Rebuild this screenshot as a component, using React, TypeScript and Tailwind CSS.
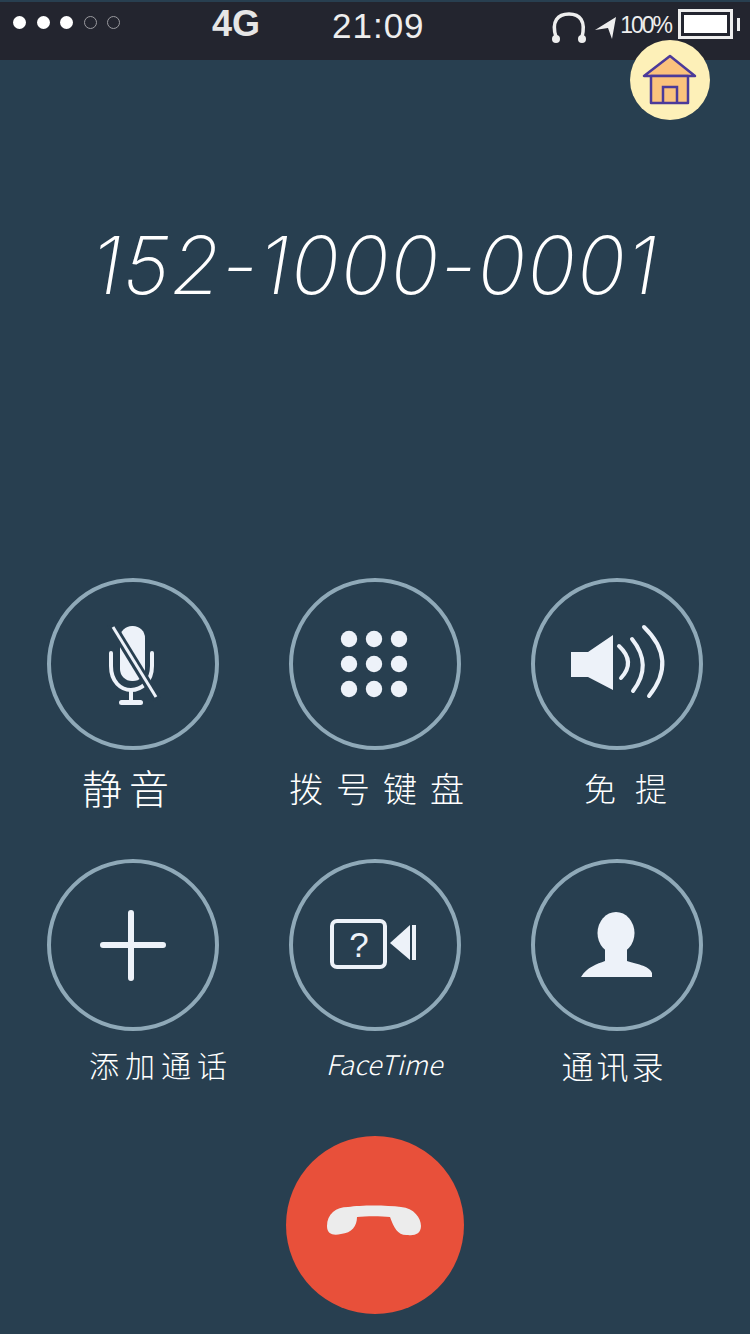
import React from 'react';

const cjk = "font-['Noto_Sans_CJK_SC','Noto_Sans',sans-serif]";

function MicIcon() {
  return (
    <svg viewBox="0 0 172 172" className="h-full w-full">
      <rect x="73" y="48" width="25" height="55" rx="12" fill="#edf2f9" />
      <path d="M64 75V88C64 104 74 112 84 112C94 112 105 104 105 88V75" fill="none" stroke="#edf2f9" strokeWidth="4" strokeLinecap="round" />
      <path d="M84 112V124" stroke="#edf2f9" strokeWidth="4" />
      <rect x="72" y="122" width="24" height="5" rx="2.5" fill="#edf2f9" />
      <path d="M64 46L110 121" stroke="#283f50" strokeWidth="9" />
      <path d="M66 49L109 119" stroke="#edf2f9" strokeWidth="3" />
    </svg>
  );
}

function KeypadIcon() {
  const spots = [61, 86, 111];
  return (
    <svg viewBox="0 0 172 172" className="h-full w-full">
      {spots.map((cy) =>
        [60, 85, 110].map((cx) => <circle key={`${cx}-${cy}`} cx={cx} cy={cy} r="8.2" fill="#edf2f9" />)
      )}
    </svg>
  );
}

function SpeakerIcon() {
  return (
    <svg viewBox="0 0 172 172" className="h-full w-full">
      <path d="M40 74H57L82 57V112L57 99H40Z" fill="#edf2f9" />
      <g fill="none" stroke="#edf2f9" strokeWidth="4" strokeLinecap="round">
        <path d="M88 68Q105 84 90 100" />
        <path d="M101 61Q122 87 102 113" />
        <path d="M113 49Q147 82 118 118" />
      </g>
    </svg>
  );
}

function PlusIcon() {
  return (
    <svg viewBox="0 0 172 172" className="h-full w-full">
      <path d="M84 54V119M56 86H116" stroke="#edf2f9" strokeWidth="6" strokeLinecap="round" />
    </svg>
  );
}

function VideoIcon() {
  return (
    <svg viewBox="0 0 172 172" className="h-full w-full">
      <rect x="43" y="62" width="53" height="46" rx="5" fill="none" stroke="#edf2f9" strokeWidth="4" />
      <text x="70" y="98" textAnchor="middle" fontSize="35" fill="#edf2f9" fontFamily="Liberation Sans, sans-serif">?</text>
      <path d="M101 84L121 66V101Z" fill="#edf2f9" />
      <rect x="123" y="66" width="4" height="35" fill="#edf2f9" />
    </svg>
  );
}

function PersonIcon() {
  return (
    <svg viewBox="0 0 172 172" className="h-full w-full">
      <ellipse cx="85" cy="74" rx="18.5" ry="21" fill="#edf2f9" />
      <path d="M50 118C56 108 66 105 74 102V88H96V102C104 105 118 106 121 114V118Z" fill="#edf2f9" />
    </svg>
  );
}

const actions = [
  { label: '静音', icon: <MicIcon />, labelClass: 'text-[40px] tracking-[7px] -ml-[8px]' },
  { label: '拨号键盘', icon: <KeypadIcon />, labelClass: 'text-[34px] tracking-[13px] ml-[16px]' },
  { label: '免提', icon: <SpeakerIcon />, labelClass: 'text-[32px] tracking-[19px] ml-[36px]' },
  { label: '添加通话', icon: <PlusIcon />, labelClass: 'text-[30px] tracking-[6px] ml-[56px] -mt-[8px]' },
  { label: 'FaceTime', icon: <VideoIcon />, labelClass: 'text-[27px] italic ml-[18px] -mt-[8px]' },
  { label: '通讯录', icon: <PersonIcon />, labelClass: 'text-[32px] tracking-[3px] -ml-[6px] -mt-[6px]' },
];

export default function App() {
  return (
    <div className={`relative flex h-[1334px] w-[750px] flex-col overflow-hidden bg-[#283f50] text-white ${cjk}`}>
      <header className="flex h-[60px] shrink-0 items-center border-t-2 border-[#283f50] bg-[#23252f] pl-[13px] pr-[10px]">
        <div className="flex -translate-y-[9px] items-center gap-[10.5px]">
          <span className="h-[13px] w-[13px] rounded-full bg-white" />
          <span className="h-[13px] w-[13px] rounded-full bg-white" />
          <span className="h-[13px] w-[13px] rounded-full bg-white" />
          <span className="h-[13px] w-[13px] rounded-full border border-[#9a9a9f]" />
          <span className="h-[13px] w-[13px] rounded-full border border-[#9a9a9f]" />
        </div>
        <span className="ml-[92px] w-[50px] -translate-y-[7px] font-['Liberation_Sans',sans-serif] text-[36px] leading-none font-bold text-[#e6e6e6]">4G</span>
        <span className="ml-[70px] -translate-y-[6px] font-['Liberation_Sans',sans-serif] text-[35px] leading-none tracking-[1px] text-[#eeeeee]">21:09</span>
        <div className="ml-auto flex -translate-y-[3px] items-center">
          <svg viewBox="0 0 38 34" className="h-[34px] w-[38px]">
            <path d="M6 26C1 10 8 3 19 3C30 3 36 10 32 26" fill="none" stroke="#eeeeee" strokeWidth="3.5" />
            <circle cx="6" cy="28" r="4" fill="#eeeeee" />
            <circle cx="32" cy="28" r="4" fill="#eeeeee" />
          </svg>
          <svg viewBox="0 0 24 24" className="ml-[6px] h-[24px] w-[24px]">
            <path d="M1 14L22 1L18 23L14 12Z" fill="#eeeeee" />
          </svg>
          <span className="ml-[2px] -translate-y-[3px] font-['Liberation_Sans',sans-serif] text-[23px] leading-none tracking-[-2px] text-[#eeeeee]">100%</span>
          <div className="ml-[7px] flex -translate-y-[4px] items-center">
            <div className="h-[30px] w-[55px] border-[3px] border-[#eeeeee] p-[3px]">
              <div className="h-full w-full bg-white" />
            </div>
            <span className="ml-[4px] h-[13px] w-[3px] bg-[#eeeeee]" />
          </div>
        </div>
      </header>

      {/* home shortcut floats over the status bar */}
      <button className="absolute left-[630px] top-[40px] h-[80px] w-[80px] rounded-full bg-[#fdf0b8]">
        <svg viewBox="0 0 80 80" className="h-full w-full">
          <path d="M40 16L14 36H65Z" fill="#fbc27d" stroke="#4b3a9a" strokeWidth="2.5" strokeLinejoin="round" />
          <path d="M21 36H58V63H21Z" fill="#fbc27d" stroke="#4b3a9a" strokeWidth="2.5" strokeLinejoin="round" />
          <path d="M33 63V47H47V63" fill="none" stroke="#4b3a9a" strokeWidth="2.5" />
        </svg>
      </button>

      <h1 className="mt-[160px] h-[90px] text-center font-['Inter',sans-serif] text-[80px] leading-[90px] font-extralight tracking-[1.5px] whitespace-nowrap italic">
        152-1000-0001
      </h1>

      <div className="mt-[268px] grid grid-cols-[172px_172px_172px] gap-x-[70px] gap-y-[35px] pl-[47px]">
        {actions.map((action) => (
          <div key={action.label} className="flex flex-col items-center">
            <div className="h-[172px] w-[172px] rounded-full border-4 border-[#8fa9b8]">
              <div className="-m-[4px] h-[172px] w-[172px]">{action.icon}</div>
            </div>
            <div className="flex h-[74px] w-[172px] items-center justify-center">
              <span className={`font-light whitespace-nowrap ${action.labelClass}`}>{action.label}</span>
            </div>
          </div>
        ))}
      </div>

      <button className="mx-auto mt-[31px] h-[178px] w-[178px] rounded-full bg-[#e8503a]">
        <svg viewBox="0 0 178 178" className="h-full w-full">
          <path d="M41 90C41 78 50 71 62 71C75 69 100 69 115 71C128 72 135 82 135 90C135 98 128 100 122 99C112 100 108 92 104 81C95 80 80 80 71 81C71 90 66 97 55 98C47 100 41 98 41 90Z" fill="#ececec" />
        </svg>
      </button>
    </div>
  );
}
